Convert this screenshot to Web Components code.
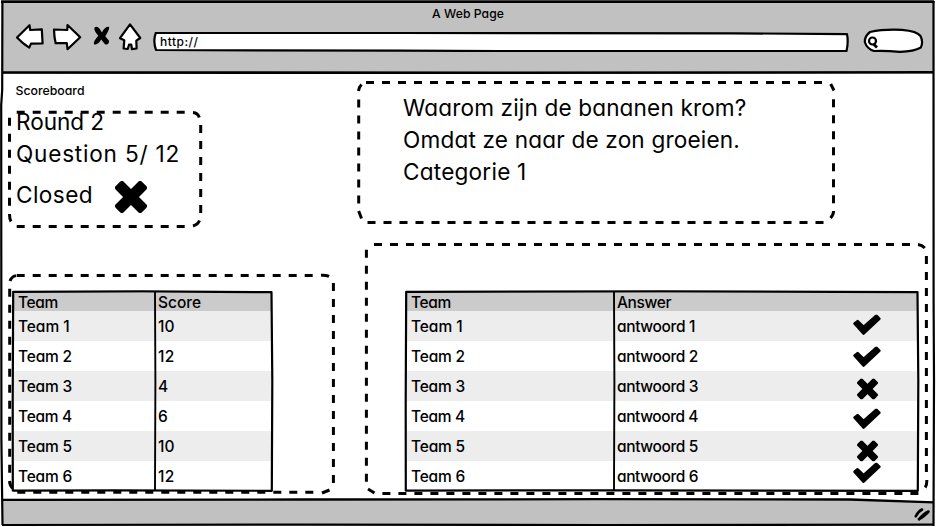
<!DOCTYPE html>
<html lang="en">
<head>
<meta charset="utf-8">
<title>A Web Page</title>
<style>
html,body{margin:0;width:936px;height:527px;overflow:hidden;background:#fff;color:#000}
body{font-family:Inter,"Open Sans",sans-serif;font-feature-settings:"cv11";font-size:15.5px;font-weight:450}
</style>
</head>
<body>
<browser-window>
  <fit-text slot="title" w="72">A Web Page</fit-text>
  <fit-text slot="url" w="38.5">http://</fit-text>
  <score-page></score-page>
</browser-window>
<script>
const define=(name,html,setup)=>customElements.define(name,class extends HTMLElement{
  constructor(){super();this.attachShadow({mode:'open'});}
  connectedCallback(){this.shadowRoot.innerHTML=typeof html==='function'?html(this):html;if(setup)setup(this);}
});

define('mark-icon',el=>{
  const s=el.getAttribute('size')||21;
  const cross=`<svg width="${s}" height="${s}" viewBox="-16 -16 32 32"><g transform="rotate(45)"><rect x="-18.5" y="-5.6" width="37" height="11.2" rx="2.6"/><rect x="-5.6" y="-18.5" width="11.2" height="37" rx="2.6"/></g></svg>`;
  const check='<svg width="28" height="21" viewBox="0 0 28 21"><path d="M1.7 9.2L4.6 6.9L10.6 12.7L23.3 1.4L26.2 4.3L10.5 19Z" stroke="#000" stroke-width="2.8" stroke-linejoin="round"/></svg>';
  return `<style>:host{display:block}svg{display:block}</style>${el.getAttribute('kind')==='check'?check:cross}`;
});

/* Dashed rounded frames: straight sides dashed 8 on / 8 off, corners hand drawn */
const frames={
  status:{v:[8,111,194,117],e:['M16.7 112.3H190','M200.7 125V216','M16.7 226.4H190','M9.5 117.7V206'],
    c:'M193 112.5Q198 113 199.3 117.5M199.5 220.5Q198 224.5 193 226M9.5 214Q9.5 219 11 221.5'},
  score:{v:[8,274,327,220],e:['M16.7 275.4H320','M333.4 283V484','M17.3 492.3H314','M9.7 288.7V474'],
    c:'M10 281Q11.5 276.5 16 275.6M321 275.3Q326 275 329 276.3M329.5 490L322 493M9.5 481Q10 486 12.5 488'},
  question:{v:[357,81,479,143],e:['M366 82.5H823','M833.5 99.3V204','M367.5 222.4H824','M358.7 99.4V204'],
    c:'M358.5 91Q359 87 361.5 84.5M830.7 84L834 90.5M833.6 211Q833.5 215 830.5 218M358.7 211L361.5 218.5'},
  answers:{v:[365,243,563,252],e:['M374 244.5H911','M926.4 256V472','M382.4 493.4H919','M366.4 249.7V482'],
    c:'M918 244.5Q922 245 924.8 248M926.8 480Q927 485 925.2 487.5M368 489L374.5 493'}
};
define('dashed-panel',el=>{
  const f=frames[el.getAttribute('frame')],v=f.v;
  return `<style>:host{display:block;position:relative;box-sizing:border-box;width:${v[2]}px;height:${v[3]}px}
  svg{position:absolute;inset:0;overflow:visible}</style>
  <svg width="${v[2]}" height="${v[3]}" viewBox="${v.join(' ')}" fill="none" stroke="#000" stroke-width="3">
  ${f.e.map(d=>`<path d="${d}" stroke-dasharray="8 8"/>`).join('')}<path d="${f.c}"/></svg><slot></slot>`;
});

define('sketch-table',el=>{
  const rows=JSON.parse(el.getAttribute('rows')),W=+el.getAttribute('width'),c=+el.getAttribute('split');
  const row=(r,i)=>`<div class="row ${i?'':'head'}"><div class="a"><fit-text w="${r[1]}">${r[0]}</fit-text></div><div class="b"><fit-text w="${r[3]}">${r[2]}</fit-text></div>${r[4]?`<mark-icon kind="${r[4]}" style="transform:translateY(${r[5]}px)"></mark-icon>`:''}</div>`;
  return `<style>:host{display:block;position:relative;width:${W}px;height:201px;box-sizing:border-box;padding:2px 2px 0}
  .row{display:flex;align-items:center;height:30px;background:#fff}
  .row:nth-of-type(even){background:#ededed}.row.head{height:18px;background:#cbcbcb}
  .a{width:${c-2}px;padding-left:4px;box-sizing:border-box}.b{flex:1;padding-left:3px}
  mark-icon{width:28px;margin-right:36px;display:flex;justify-content:center}
  svg{position:absolute;left:0;top:0;overflow:visible}</style>
  ${rows.map(row).join('')}
  <svg width="${W}" height="201" fill="none" stroke="#000"><path stroke-width="2.2" stroke-linejoin="round" d="M1.2 .8L${W*.5} .4L${W-1.5} 1.2L${W-.7} 90L${W-1.2} 199.8L${W*.4} 199.3L.8 199.6L.7 110Z"/><path stroke-width="1.9" d="M${c} 1L${c+.4} 90L${c} 199"/></svg>`;
});

define('score-page',()=>{
  const A=(n,k,y)=>['Team '+n,n==1?51.5:54,'antwoord '+n,n==1?78:81,k,y];
  const left=[['Team',40,'Score',43],...[10,12,4,6,10,12].map((s,i)=>['Team '+(i+1),i?54:51.5,''+s,s>9?16.5:10])];
  const right=[['Team',40,'Answer',54],A(1,'check',-1.6),A(2,'check',.4),A(3,'cross',2.4),A(4,'check',2.4),A(5,'cross',4.4),A(6,'check',-3.5)];
  return `<style>:host{display:flex;width:100%;height:100%}
  .left{width:327px;margin-left:8px}
  .title{height:37px;box-sizing:border-box;padding:8px 0 0 7.5px;font-size:12.3px;line-height:17px}
  .big{font-size:22.6px;line-height:32px;font-weight:400}.big fit-text{display:block;width:max-content}
  .status{margin:-5px 0 0 8px}
  .closed{display:flex;align-items:center;gap:21.5px;margin-top:9px;height:32px}
  .closed mark-icon{transform:translateY(2px)}
  .score{margin-top:46px}
  .score sketch-table{margin:17px 0 0 4px}
  .right{margin:7px 0 0 22px}
  .q{padding:11px 0 0 46px}
  .answers{margin:19px 0 0 8px}
  .answers sketch-table{margin:48px 0 0 40px}
  dashed-panel{display:flow-root}</style>
  <div class="left">
    <div class="title"><fit-text w="69">Scoreboard</fit-text></div>
    <dashed-panel frame="status"><div class="big status"><fit-text w="88">Round 2</fit-text><fit-text w="164">Question 5/ 12</fit-text>
    <div class="closed"><fit-text w="77">Closed</fit-text><mark-icon kind="cross" size="32"></mark-icon></div></div></dashed-panel>
    <dashed-panel class="score" frame="score"><sketch-table width="261" split="143" rows='${JSON.stringify(left)}'></sketch-table></dashed-panel>
  </div>
  <div class="right">
    <dashed-panel frame="question"><div class="big q"><fit-text w="343.5">Waarom zijn de bananen krom?</fit-text><fit-text w="337">Omdat ze naar de zon groeien.</fit-text><fit-text w="123.5">Categorie 1</fit-text></div></dashed-panel>
    <dashed-panel class="answers" frame="answers"><sketch-table width="514" split="209" rows='${JSON.stringify(right)}'></sketch-table></dashed-panel>
  </div>`;
});

define('browser-window',`<style>
:host{display:flex;flex-direction:column;position:relative;width:936px;height:527px;box-sizing:border-box;padding:1px 2px 2px 2px}
header{height:73px;background:#c1c1c1;flex:none}
.title{display:flex;justify-content:center;font-size:12.2px;line-height:17px;padding-top:4px;height:20px;box-sizing:border-box}
.bar{display:flex;align-items:center;height:34px}
.nav{margin-left:13px;flex:none}
.url{width:696px;height:20px;margin:8px 0 0 8px;position:relative;font-size:12px;line-height:19px;box-sizing:border-box;padding-left:7px;flex:none}
.url svg{position:absolute;left:0;top:0;z-index:-1}.url{z-index:0}
.search{margin:6px 0 0 14px;flex:none}
main{flex:1;margin-left:-2px}
footer{height:25px;background:#c1c1c1;display:flex;justify-content:flex-end;align-items:center;flex:none}
.grip{margin:2px 3px 0 0}
.outline{position:absolute;inset:0;pointer-events:none}
svg{display:block}
</style>
<header>
 <div class="title"><slot name="title"></slot></div>
 <div class="bar">
  <svg class="nav" width="130" height="34" viewBox="15 21 130 34" fill="#fff" stroke="#000" stroke-width="2.2" stroke-linejoin="round">
   <path d="M17 37.5L29.5 25.2L30.2 30L41.8 29.3L42.6 43.5L31 43.6L29.2 47.6Q22 43 17 37.5Z"/>
   <path d="M54 29.5L67.3 30L67.5 25L80.2 37.2L67.5 49.2L66.8 43L55.7 43.2L54.5 37Z"/>
   <path d="M130 24.3L140.3 38L136.3 40.7L136.6 48.5L132 49.2L131.2 44.5L129 44.7L127.8 49L123.6 48.5L124.3 40.2L120 38.2Z"/>
   <path fill="#000" stroke="none" d="M94.5 27.5Q97 25.5 99.2 28.3L102 32.5Q104.5 26.5 109 26.8Q110 29 105.3 36.2L109.2 41Q108.5 45.5 105 44.3L101.2 39.5Q98 45 94 44.4Q93 41.5 98.3 35.8Q93.5 30.5 94.5 27.5Z"/>
  </svg>
  <div class="url"><svg width="696" height="20" viewBox="153 31 696 20"><path fill="#fff" stroke="#000" stroke-width="2.2" stroke-linejoin="round" d="M155.8 31.9L400 31.9L735 32.3L847 33.2Q848.6 41 846.5 50L500 50L400 49.7L156 49Q152.8 40 155.8 31.9Z"/></svg><slot name="url"></slot></div>
  <svg class="search" width="61" height="26" viewBox="863 28 61 26" fill="#fff" stroke="#000" stroke-width="2.2"><path d="M870 32Q883 29 902 29.8Q917 31 920.5 36Q923.5 42 920.8 47.5Q914 51.5 900 51.8Q885 50.5 874 51Q867 49 864.8 42Q864.7 36 870 32Z"/><circle cx="872.5" cy="41" r="3.5"/><path stroke-width="2.8" d="M873.5 44L877 47.5"/></svg>
 </div>
</header>
<main><slot></slot></main>
<footer><svg class="grip" width="18" height="16" viewBox="913 506 18 16" fill="none" stroke="#000" stroke-width="2.6" stroke-linecap="round"><path d="M915.8 516.3Q918 511.5 922 509.5M919 519.3Q924 513.5 928.5 511.5M919 519Q922 518 928 512.2"/></svg></footer>
<svg class="outline" width="936" height="527" fill="none" stroke="#000">
 <path stroke="none" fill="#fff" d="M300 499H934V501.5L850 499.5Z"/>
 <path stroke="#444" stroke-width="1" d="M1 .5H934"/>
 <path stroke-width="2" d="M1 2H934.5"/>
 <path stroke-width="2.2" d="M2.4 1L2.2 90L1.2 105L1.4 440L2.5 525"/>
 <path stroke-width="2.2" d="M933.5 1L933.6 300L934 380L933.5 526"/>
 <path stroke-width="2.2" d="M2 525L300 524.6L600 525L934 524.6"/>
 <path stroke-width="2.6" d="M2 72.5L500 72.8L934 72.3"/>
 <path stroke-width="2.3" d="M2 499.9L300 499.5L600 499.2L850 499.5L934 502.3"/>
</svg>`);

/* Text whose tracking is set so that it spans the width given in "w".
   Defined last: its parents' shadow trees must be in place when it measures itself. */
define('fit-text','<style>:host{display:inline-block;white-space:pre}</style><slot></slot>',el=>{
  const w=+el.getAttribute('w'),n=el.textContent.length;
  if(w){
    el.style.letterSpacing='0px';
    el.style.letterSpacing=((w-el.getBoundingClientRect().width)/n)+'px';
  }
});
</script>
</body>
</html>
